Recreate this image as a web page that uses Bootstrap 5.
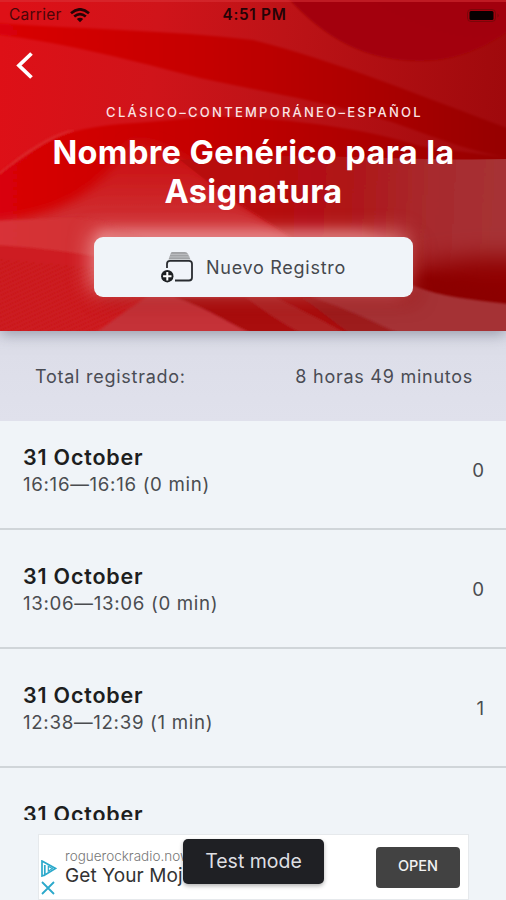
<!DOCTYPE html>
<html lang="es">
<head>
<meta charset="utf-8">
<meta name="viewport" content="width=device-width, initial-scale=1">
<title>Nombre Genérico para la Asignatura</title>
<link href="https://cdn.jsdelivr.net/npm/bootstrap@5.3.0/dist/css/bootstrap.min.css" rel="stylesheet">
<style>
body{font-family:Inter,"Liberation Sans",sans-serif;background:#f0f4f8;color:#1d1e20}
.screen{height:900px}
.hero{height:331px;background:#c8060b;z-index:1;box-shadow:0 3px 14px rgba(90,95,115,.55)}
.hero-art{inset:0;width:100%;height:100%;z-index:-1}
.status{height:28px;padding:2px 6px 0 9px;font-size:15.5px;color:#250306}
.status>*{flex:1 1 0}
.carrier{letter-spacing:.25px;color:#4c0508}
.clock{font-weight:600;letter-spacing:.7px;font-size:15.3px}
.back{height:75px;padding:24px 0 0 16px}
.kicker{font-size:13px;font-weight:500;letter-spacing:2.25px;line-height:18px;color:#fbe3e4;padding-left:23px}
.subject{font-size:32.5px;font-weight:700;line-height:39px;margin:12px 0 0;letter-spacing:.38px;padding-left:1px}
.btn-new{width:319px;height:60px;border-radius:9px;background:#f0f4f9;margin-top:26px;padding:0 13px 0 14px;font-size:18px;letter-spacing:.72px;color:#45484d;box-shadow:-5px -5px 20px rgba(255,200,200,.55),5px 5px 18px rgba(150,0,0,.5)}
.btn-new:hover{background:#fff}
.btn-new span{margin-left:13px}
.total{height:90px;padding:0 33px 0 35px;background:linear-gradient(#dcdde8,#e0e1ec);font-size:18px;letter-spacing:.74px;color:#4a4c54}
.records{height:399px}
.record{height:119px;padding:0 22px 0 23px;border-bottom:2px solid #d0d5d9;background:#f0f4f8;flex:none}
.record:first-child{margin-top:-10px}
.entry{padding-top:4px}
.day{font-size:21.5px;font-weight:600;line-height:27px;letter-spacing:.8px}
.span,.count{font-size:18.7px;line-height:28px;letter-spacing:.68px;color:#4a4c50}
.count{padding-top:3px;letter-spacing:0}
.ad{left:38px;top:834px;width:431px;height:66px;background:#fff;border:1px solid #e6e9ec;padding:0 8px 0 1px}
.marks{width:25px}
.ad-copy{width:121px}
.ad-site{font-size:13.5px;font-weight:300;line-height:17px;color:#777}
.ad-title{font-size:19px;line-height:22px;letter-spacing:.1px;color:#333}
.btn-open{width:84px;height:41px;background:#424242;color:#f2f2f2;border-radius:4px;font-size:14.5px;font-weight:500;padding:0 0 2px}
.toast-pill{left:183px;top:839px;width:141px;height:45px;border-radius:5px;background:#1f2024;color:#dedfe2;font-size:19.5px;box-shadow:0 2px 4px rgba(0,0,0,.3)}
</style>
</head>
<body>
<main class="screen position-relative overflow-hidden d-flex flex-column">
<header class="hero position-relative text-white flex-shrink-0 d-flex flex-column">
<svg class="hero-art position-absolute" viewBox="0 0 506 331" preserveAspectRatio="none" aria-hidden="true">
<defs>
<linearGradient id="base" gradientUnits="userSpaceOnUse" x1="0" x2="506" y1="60" y2="110"><stop offset="0" stop-color="#de1017"/><stop offset=".3" stop-color="#d0141a"/><stop offset=".55" stop-color="#bd1317"/><stop offset="1" stop-color="#9f090c"/></linearGradient>
<linearGradient id="deep" gradientUnits="userSpaceOnUse" x1="0" x2="506" y1="0" y2="0"><stop offset="0" stop-color="#d90307"/><stop offset=".4" stop-color="#c50104"/><stop offset=".7" stop-color="#ae0103"/><stop offset="1" stop-color="#960205"/></linearGradient>
<linearGradient id="pale" gradientUnits="userSpaceOnUse" x1="0" x2="420" y1="250" y2="250"><stop offset="0" stop-color="#d83237"/><stop offset=".5" stop-color="#c83034"/><stop offset="1" stop-color="#ad2c30"/></linearGradient>
<linearGradient id="rise" gradientUnits="userSpaceOnUse" x1="0" x2="0" y1="135" y2="235"><stop offset="0" stop-color="#ca2226" stop-opacity=".3"/><stop offset="1" stop-color="#d0393d"/></linearGradient>
<linearGradient id="veil" gradientUnits="userSpaceOnUse" x1="250" x2="506" y1="180" y2="195"><stop offset="0" stop-color="#b80a0d"/><stop offset=".35" stop-color="#b01316"/><stop offset=".7" stop-color="#a82a2d"/><stop offset="1" stop-color="#a63235"/></linearGradient>
<pattern id="mesh" width="7" height="4" patternUnits="userSpaceOnUse" patternTransform="rotate(-24)"><path d="M0 2H7" stroke="#7c0004" stroke-width=".8" opacity=".16"/></pattern>
<filter id="soft"><feGaussianBlur stdDeviation="1"/></filter>
<filter id="mid" filterUnits="userSpaceOnUse" x="-60" y="-60" width="640" height="460"><feGaussianBlur stdDeviation="6"/></filter>
<filter id="wide" filterUnits="userSpaceOnUse" x="-60" y="-60" width="680" height="460"><feGaussianBlur stdDeviation="12"/></filter>
<clipPath id="lower"><path d="M180 160C300 150 400 162 510 159V331H257L230 200Z"/></clipPath>
</defs>
<rect width="506" height="331" fill="url(#base)"/>
<g filter="url(#soft)">
<path d="M-5 23C80 29 170 30 253 40C340 62 420 96 510 129V158C450 148 410 125 370 116C320 101 260 91 200 78C130 60 70 44 -5 34Z" fill="url(#deep)"/>
<path d="M285 -5C325 39 365 61 420 61C460 61 490 44 510 30V-5Z" fill="#a30508"/>
<path d="M370 0H510V30C470 50 410 25 370 0Z" fill="url(#mesh)"/>
<path d="M-5 176C35 142 65 129 120 124C160 121 185 119 215 116C300 119 370 130 420 146L510 158V331H-5Z" fill="url(#deep)"/>
<path d="M-5 176C35 142 65 129 75 130C50 138 30 151 -5 178Z" fill="#dc2a2f"/>
</g>
<path d="M-10 223C60 216 100 195 128 140C160 138 185 155 220 188L295 240V300H-10Z" fill="url(#rise)" filter="url(#mid)"/>
<g clip-path="url(#lower)">
<path d="M175 158C230 200 260 216 296 240L330 300H520V150Z" fill="url(#veil)" filter="url(#soft)"/>
<path d="M330 290C410 275 440 245 560 262V350H330Z" fill="#900104" filter="url(#wide)"/>
<path d="M410 278C440 272 470 285 530 288V320H410Z" fill="#8c0103" filter="url(#mid)"/>
</g>
<g filter="url(#soft)">
<path d="M-5 221C55 219 90 214 115 226L180 250L330 320L-5 335Z" fill="url(#pale)"/>
<path d="M-5 245C45 248 90 254 180 272L95 335H-5Z" fill="#ce1b20"/>
<path d="M-5 258L180 275L90 335H-5Z" fill="url(#mesh)"/>
<path d="M95 333C115 320 128 308 148 297H180C205 308 225 322 260 333Z" fill="#c53337"/>
<path d="M174 297H330L420 335H257C235 328 215 311 174 297Z" fill="#a9090d"/>
<path d="M245 297C265 312 280 322 300 333H345C322 320 300 309 275 297Z" fill="#ae2024"/>
<path d="M300 297C345 302 370 315 410 333H350C330 320 320 309 300 297Z" fill="#9d1c1f"/>
<path d="M310 297L412 285C440 297 475 300 510 304V335H403C370 321 345 307 310 297Z" fill="#a53235"/>
</g>
<path d="M98 231H360L390 242H108V275H98Z" fill="#f4a7a9" opacity=".4" filter="url(#mid)"/>
<rect width="506" height="2" fill="#db3439" opacity=".5"/>
</svg>
<div class="status d-flex align-items-center">
<div class="carrier d-flex align-items-center gap-2"><span>Carrier</span><svg width="20" height="15" viewBox="0 0 20 15" fill="none" stroke="#250306" stroke-width="2.6"><path d="M1 5.2Q10-2.6 19 5.2M4.2 8.6Q10 3.6 15.8 8.6"/><path d="M10 14.3L6.8 11Q10 8.6 13.2 11Z" fill="#250306" stroke="none"/></svg></div>
<div class="clock text-center">4:51 PM</div>
<div class="d-flex justify-content-end"><svg width="33" height="13" viewBox="0 0 33 13"><rect x=".5" y=".5" width="28" height="12" rx="3.5" fill="none" stroke="#7a0609"/><rect x="2.5" y="2" width="24" height="9" rx="1.5" fill="#080001"/><path d="M30.5 4.5Q33 6.5 30.5 8.5Z" fill="#7a0609"/></svg></div>
</div>
<a class="back d-block" href="#" aria-label="Atrás"><svg class="d-block" width="18" height="28" viewBox="0 0 18 28" fill="none" stroke="#fff" stroke-width="3.8"><path d="M15.5 1.5L3 13.5L15.5 25.5"/></svg></a>
<div class="kicker text-center">CLÁSICO–CONTEMPORÁNEO–ESPAÑOL</div>
<h1 class="subject text-center">Nombre Genérico para la<br>Asignatura</h1>
<button class="btn btn-new border-0 mx-auto d-flex align-items-center justify-content-center" type="button">
<svg width="32" height="32" viewBox="0 0 32 32"><path d="M11 1H24Q26 1 27 3L29.5 8.5H7.5L9.5 3Q10 1 11 1Z" fill="#a1a3a6"/><path d="M9 3.4H27M8 5.9H29" stroke="#c9ccd0" stroke-width=".7"/><path d="M6 17V13Q6 9.8 9 9.8H28Q31 9.8 31 12.8V26.5Q31 29.5 28 29.5H14" fill="none" stroke="#292c30" stroke-width="1.8"/><circle cx="6.3" cy="25.2" r="6.2" fill="#1d2023"/><path d="M6.3 21V29.4M2.1 25.2H10.5" stroke="#fff" stroke-width="2"/></svg>
<span>Nuevo Registro</span></button>
</header>
<section class="total d-flex align-items-center justify-content-between flex-shrink-0"><span>Total registrado:</span><span>8 horas 49 minutos</span></section>
<section class="records overflow-hidden d-flex flex-column flex-shrink-0">
<article class="record d-flex align-items-center justify-content-between"><div class="entry"><div class="day">31 October</div><div class="span">16:16—16:16 (0 min)</div></div><div class="count">0</div></article>
<article class="record d-flex align-items-center justify-content-between"><div class="entry"><div class="day">31 October</div><div class="span">13:06—13:06 (0 min)</div></div><div class="count">0</div></article>
<article class="record d-flex align-items-center justify-content-between"><div class="entry"><div class="day">31 October</div><div class="span">12:38—12:39 (1 min)</div></div><div class="count">1</div></article>
<article class="record d-flex align-items-center justify-content-between"><div class="entry"><div class="day">31 October</div><div class="span">12:38—12:38 (0 min)</div></div><div class="count">1</div></article>
</section>
<aside class="ad position-absolute d-flex align-items-center">
<div class="marks d-flex flex-column gap-1 flex-shrink-0 pt-3 mt-1"><svg width="17" height="17" viewBox="0 0 17 17" fill="none" stroke="#2ba9cb" stroke-width="1.7"><path d="M4.8 15L2 16V1L15.5 8.5L4.8 15V5"/><path d="M8.3 6.2V11.2L12.3 8.6Z" stroke-width="1.2"/></svg><svg width="15" height="14" viewBox="0 0 15 14" stroke="#2ba9cb" stroke-width="1.8"><path d="M2 1L14 13M14 1L2 13"/></svg></div>
<div class="ad-copy overflow-hidden text-nowrap"><div class="ad-site">roguerockradio.now</div><div class="ad-title">Get Your Moj</div></div>
<button class="btn btn-open ms-auto" type="button">OPEN</button>
</aside>
<div class="toast-pill position-absolute d-flex align-items-center justify-content-center" role="status">Test mode</div>
</main>
<script src="https://cdn.jsdelivr.net/npm/bootstrap@5.3.0/dist/js/bootstrap.bundle.min.js"></script>
</body>
</html>
